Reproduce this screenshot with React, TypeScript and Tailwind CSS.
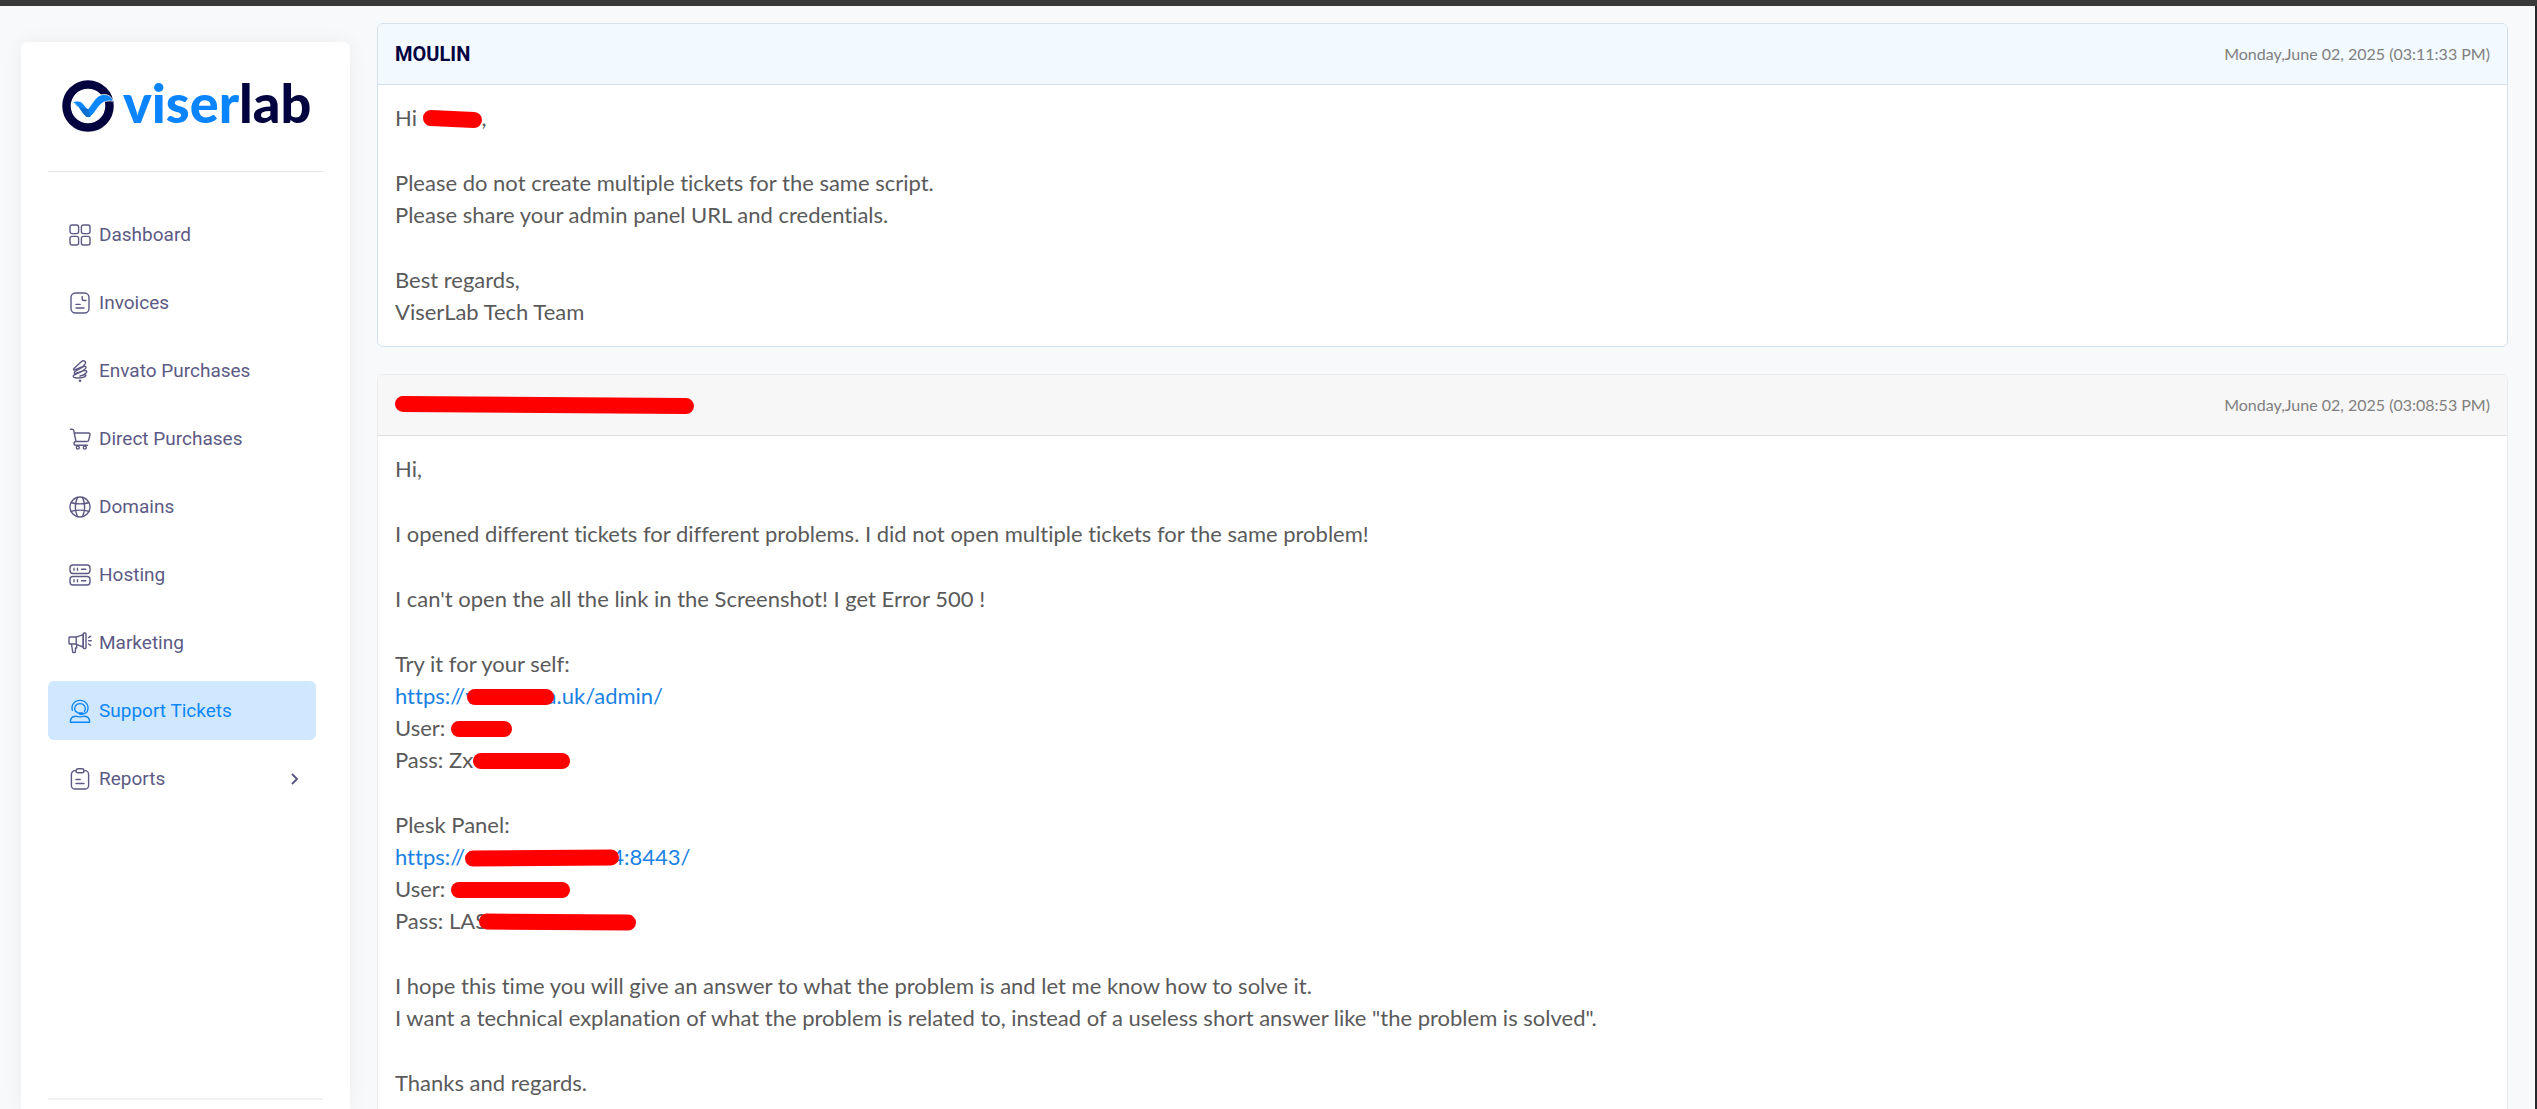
import type { ReactNode } from "react";

const icons: Record<string, ReactNode> = {
  dashboard: (
    <>
      <rect x="1" y="1" width="8.6" height="8.6" rx="2" />
      <rect x="12.4" y="1" width="8.6" height="8.6" rx="2" />
      <rect x="1" y="12.4" width="8.6" height="8.6" rx="2" />
      <rect x="12.4" y="12.4" width="8.6" height="8.6" rx="2" />
    </>
  ),
  invoices: (
    <>
      <rect x="2" y="1" width="18" height="20" rx="4.5" />
      <path d="M13.2 4.5v2.2a1.8 1.8 0 0 0 1.8 1.8h2M7 12.4h4.2M7 16h8" />
    </>
  ),
  envato: (
    <>
      <path d="M5 8.500 12.500 1.600c2.200-1.800 5-.2 3.600 2.200L14 7 6 11.500M5 8.500c-1 1-.5 1.800.8 1.400L14 6.500c2.800-.8 3.800.8 2.300 2.200L13.500 11 5 15M6 11.500c-1.200 1.200-.8 2 .6 1.900l7.400-2.600c3-.8 4.600.4 3.200 1.900L14.500 15M5 15c-1.500 1.200-.8 2.600 1.500 2.800 3.500.3 7 .3 9.500-1.200 1.800-1.100.8-2.300-1.500-1.600L11 16" />
      <circle cx="11" cy="20.800" r="1.300" fill="currentColor" stroke="none" />
    </>
  ),
  cart: (
    <>
      <path d="M1.500 1.200h1.700c.9 0 1.300.4 1.500 1.200L7 13.500M5 5h14.600c1 0 1.600.7 1.400 1.600l-1.300 5.500c-.2.900-.8 1.400-1.700 1.400H7.200c-1.400 0-2.200.9-2.200 1.900s.8 1.800 2 1.800h11.500" />
      <circle cx="8.800" cy="19.600" r="1.500" />
      <circle cx="15.800" cy="19.600" r="1.500" />
    </>
  ),
  domains: (
    <>
      <circle cx="11" cy="11" r="10" />
      <path d="M8.500 1.400c-2.800 6.200-2.800 13 0 19.200M13.500 1.400c2.800 6.200 2.800 13 0 19.200M2.200 6.700c6 1.600 11.600 1.600 17.600 0M2.200 15.300c6-1.600 11.600-1.600 17.600 0" />
    </>
  ),
  hosting: (
    <>
      <rect x="1" y="1" width="20" height="8.500" rx="3" />
      <rect x="1" y="12.500" width="20" height="8.500" rx="3" />
      <path d="M5 4.300v2M8.500 4.300v2M12.500 5.300h4.300M5 15.800v2M8.500 15.800v2M12.500 16.800h4.300" />
    </>
  ),
  marketing: (
    <>
      <path d="M.8 5h6.400v7H.8a.8.800 0 0 1-.8-.8V5.800A.8.800 0 0 1 .8 5zM7.200 5.200l7-2.600v12.400l-7-2.600" />
      <rect x="14.200" y="1" width="2.800" height="15.500" rx="1" />
      <path d="m2.500 12 1.200 8c.2.900 2.800.9 2.700-.1V16h1.300v-4M19.500 5.600l2.200-1.400M19.700 8.800h2.500M19.500 12l2.200 1.400" />
    </>
  ),
  support: (
    <>
      <path d="M3.300 10.200C1.800 4.300 6 .4 11 .4s9.200 3.900 7.700 9.800c-.5 2-2.200 3.400-4.700 3.500" />
      <path d="M6.600 11.500C4.300 8 6.500 3.600 11 3.600s6.700 4.400 4.400 7.900M7.300 11.700c1 1 2.200 1.500 3.400 1.700" />
      <path d="M11 13.600h2.200" strokeWidth="2.600" />
      <path d="M1.500 22.300h19c.6-3.400-1.600-6-5-6.100-3 .9-6 .9-9 0-3.400.1-5.600 2.700-5 6.100z" />
    </>
  ),
  reports: (
    <>
      <path d="M7 2.600H6A3.600 3.600 0 0 0 2.400 6.200v11.200A3.600 3.600 0 0 0 6 21h10a3.600 3.600 0 0 0 3.600-3.600V6.200A3.600 3.600 0 0 0 16 2.600h-1" />
      <rect x="7" y=".8" width="8" height="4" rx="2" />
      <path d="M7 11.500h4.200M7 15.500h8" />
    </>
  ),
};

const menu = [
  { label: "Dashboard", icon: "dashboard" },
  { label: "Invoices", icon: "invoices" },
  { label: "Envato Purchases", icon: "envato" },
  { label: "Direct Purchases", icon: "cart" },
  { label: "Domains", icon: "domains" },
  { label: "Hosting", icon: "hosting" },
  { label: "Marketing", icon: "marketing" },
  { label: "Support Tickets", icon: "support", active: true },
  { label: "Reports", icon: "reports", sub: true },
];

function Logo() {
  return (
    <a href="#home" className="flex h-[52px] items-start gap-[9px] pl-[14px]">
      <svg viewBox="0 0 52 52" className="size-[52px] shrink-0" aria-hidden="true">
        <circle cx="26" cy="26" r="21.500" fill="none" stroke="#03033f" strokeWidth="8.500" />
        <path d="M10.500 22.500c4.500-2.500 8.500-1.500 11 1.500 2 2.400 3 4.500 4.500 5 3-3.500 5.500-8.500 9-11.700 5-4.500 12-3.600 15.500 1.900.5 1 .6 1.500.5 2-8-1.500-12 2-16.500 8.300-2 3-4 5.500-6 7-1.300 1-3.200 1-4.500 0-2.500-2-5-5.500-7-8.500-1.800-2.700-3.500-4.500-6.500-5.500z" fill="#0c86fb" stroke="#fff" strokeWidth=".8" />
        <path d="M13 24.500c4 3 8 4 13 4.500l2.500 7.500c-1.300 1-3.200 1-4.500 0-3-2.500-6-8-8-10.500-1-1.200-2-1.500-3-1.500z" fill="#0a6fd0" />
      </svg>
      <span className="font-['Lato',sans-serif] text-[54px] leading-[46px] font-black text-[#03033f]">
        <span className="text-[#0a85ff]">viser</span>lab
      </span>
    </a>
  );
}

function Sidebar() {
  return (
    <aside className="mt-9 ml-[21px] flex w-[329px] shrink-0 flex-col rounded-t-md bg-white px-[27px] pt-[38px] pb-[9px] shadow-[0_0_20px_rgba(0,0,0,0.06)]">
      <Logo />
      <hr className="mt-[39px] border-[#e3e3e6]" />
      <nav className="mt-[33px] mr-[7px] flex flex-1 flex-col gap-[9px]">
        {menu.map((item) => (
          <a
            key={item.label}
            href="#menu"
            className={`flex h-[59px] items-center gap-2 rounded-md pr-[17px] pl-[21px] font-['Roboto',sans-serif] text-[19px] leading-6 ${
              item.active ? "bg-[#d0e8ff] text-[#0d86f8]" : "text-[#5c5a85]"
            }`}
          >
            <svg viewBox="0 0 22 22" className="size-[22px] shrink-0 overflow-visible" fill="none" stroke="currentColor" strokeWidth="1.400" strokeLinecap="round" strokeLinejoin="round" aria-hidden="true">
              {icons[item.icon]}
            </svg>
            <span className="flex-1">{item.label}</span>
            {item.sub && (
              <svg viewBox="0 0 8 12" className="h-3 w-2" fill="none" stroke="currentColor" strokeWidth="2" aria-hidden="true">
                <path d="m1 1 5 5-5 5" />
              </svg>
            )}
          </a>
        ))}
      </nav>
      <hr className="border-t-2 border-[#f2f2f2]" />
    </aside>
  );
}

// Red marker stroke over private text; `tilt` lowers its right end.
function Marker({ width, tilt = 0, className = "" }: { width: number; tilt?: number; className?: string }) {
  return (
    <svg width={width} height="20" className={`relative inline-block overflow-visible align-[-3px] ${className}`} role="img" aria-label="hidden">
      <line x1="8" y1={10 - tilt / 2} x2={width - 8} y2={10 + tilt / 2} stroke="#ff0000" strokeWidth="16" strokeLinecap="round" />
    </svg>
  );
}

function Message({ author, date, staff, children }: { author: ReactNode; date: string; staff?: boolean; children: ReactNode }) {
  return (
    <article className={`overflow-hidden rounded-md border bg-white ${staff ? "border-[#d3e1ef]" : "border-[#ececee]"}`}>
      <header
        className={`flex h-[61px] items-center justify-between border-b px-[17px] ${
          staff ? "border-[#d3dfea] bg-[#f2f9ff]" : "border-[#dcdcdc] bg-[#f7f7f7]"
        }`}
      >
        <h2 className="font-['Roboto',sans-serif] text-[20px] leading-6 font-bold text-[#03033f]">{author}</h2>
        <time className="text-[16px] leading-6 text-[#808080]">{date}</time>
      </header>
      <div className="flex flex-col gap-[33px] px-[17px] pt-[17px] pb-[18px] text-[22px] leading-[32px] text-[#5a5a5a]">{children}</div>
    </article>
  );
}

export default function App() {
  return (
    <div className="flex h-screen flex-col overflow-hidden bg-[#f8f9fb] font-['Lato',sans-serif] [font-variant-ligatures:none]">
      <div className="h-1.5 shrink-0 bg-[#3a3a3a]" />
      <div className="flex min-h-0 flex-1 border-r-2 border-[#25282c]">
        <Sidebar />
        <main className="flex min-w-0 flex-1 flex-col gap-[27px] px-[27px] pt-[17px]">
          <div className="shrink-0">
            <Message staff author="MOULIN" date="Monday,June 02, 2025 (03:11:33 PM)">
              <p>
                Hi <Marker width={59} tilt={2} />,
              </p>
              <p>
                Please do not create multiple tickets for the same script.
                <br />
                Please share your admin panel URL and credentials.
              </p>
              <p>
                Best regards,
                <br />
                ViserLab Tech Team
              </p>
            </Message>
          </div>
          <div className="shrink-0">
            <Message author={<Marker width={299} tilt={2} />} date="Monday,June 02, 2025 (03:08:53 PM)">
              <p>Hi,</p>
              <p>I opened different tickets for different problems. I did not open multiple tickets for the same problem!</p>
              <p>I can't open the all the link in the Screenshot! I get Error 500 !</p>
              <p>
                Try it for your self:
                <br />
                <a href="#admin" className="text-[#1a82e2]">
                  https://v
                  <Marker width={87} className="-mr-2 -ml-2.5" />
                  a.uk/admin/
                </a>
                <br />
                User: <Marker width={61} />
                <br />
                Pass: Zx
                <Marker width={97} />
              </p>
              <p>
                Plesk Panel:
                <br />
                <a href="#plesk" className="text-[#1a82e2]">
                  https://
                  <Marker width={154} tilt={-1} className="-mr-2" />
                  4:8443/
                </a>
                <br />
                User: <Marker width={119} />
                <br />
                Pass: LAS
                <Marker width={157} tilt={1} className="-ml-2" />
              </p>
              <p>
                I hope this time you will give an answer to what the problem is and let me know how to solve it.
                <br />
                I want a technical explanation of what the problem is related to, instead of a useless short answer like "the problem is solved".
              </p>
              <p>Thanks and regards.</p>
            </Message>
          </div>
        </main>
      </div>
    </div>
  );
}
